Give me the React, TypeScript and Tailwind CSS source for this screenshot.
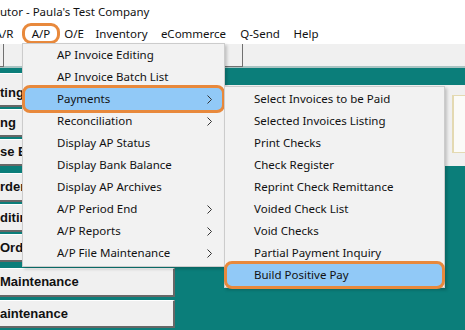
import React from 'react';

const apItems = [
  { label: 'AP Invoice Editing' },
  { label: 'AP Invoice Batch List' },
  { label: 'Payments', sub: true, active: true },
  { label: 'Reconciliation', sub: true },
  { label: 'Display AP Status' },
  { label: 'Display Bank Balance' },
  { label: 'Display AP Archives' },
  { label: 'A/P Period End', sub: true },
  { label: 'A/P Reports', sub: true },
  { label: 'A/P File Maintenance', sub: true },
];

const paymentItems = [
  { label: 'Select Invoices to be Paid' },
  { label: 'Selected Invoices Listing' },
  { label: 'Print Checks' },
  { label: 'Check Register' },
  { label: 'Reprint Check Remittance' },
  { label: 'Voided Check List' },
  { label: 'Void Checks' },
  { label: 'Partial Payment Inquiry' },
  { label: 'Build Positive Pay', active: true },
];

// left column buttons, mostly hidden behind the menus
const sideButtons = [
  { label: 'ting', cls: 'h-[34px] mb-[2px] pt-[6px]' },
  { label: 'ng', cls: 'h-[28px] mb-[2px]' },
  { label: 'se E', cls: 'h-[27px] mb-[7px]' },
  { label: 'rder', cls: 'h-[29px] mb-[2px]' },
  { label: 'ditin', cls: 'h-[28px] mb-[2px]' },
  { label: 'Ord', cls: 'h-[28px] mb-[6px]' },
  { label: 'Maintenance', cls: 'h-[29px] mb-[3px]' },
  { label: 'aintenance', cls: 'h-[28px]' },
];

const menuBar = [
  { label: 'A/R', cls: 'ml-[-14px] w-[36px]' },
  { label: 'A/P', cls: 'w-[38px]', open: true },
  { label: 'O/E', cls: 'w-[28px]' },
  { label: 'Inventory', cls: 'w-[67px]' },
  { label: 'eCommerce', cls: 'w-[77px]' },
  { label: 'Q-Send', cls: 'w-[56px]' },
  { label: 'Help', cls: 'w-[36px]' },
];

const Chevron = () => (
  <svg className="w-[5px] h-[9px] text-[#333]" viewBox="0 0 5 9" fill="none" stroke="currentColor">
    <path d="M0.5 0.5l4 4-4 4" strokeWidth={1} />
  </svg>
);

const Ring = () => (
  <span className="pointer-events-none absolute -inset-[3px] rounded-[8px] border-[3px] border-[#e8893c]" />
);

export default function App() {
  return (
    <div
      className="relative w-[465px] h-[330px] overflow-hidden bg-white text-[#111]"
      style={{ fontFamily: '"Noto Sans", "Open Sans", sans-serif' }}
    >
      {/* title bar */}
      <div className="h-[22px] pt-[1px] flex items-center text-[11.5px] leading-none whitespace-nowrap">
        utor - Paula's Test Company
      </div>

      {/* menu bar */}
      <div className="h-[22px] flex items-center text-[11.5px] whitespace-nowrap">
        {menuBar.map((m) => (
          <div
            key={m.label}
            className={`${m.cls} h-[21px] pt-[1px] flex items-center justify-center shrink-0 ${
              m.open ? 'rounded-[9px] border-[3px] border-[#e8893c]' : ''
            }`}
          >
            {m.label}
          </div>
        ))}
      </div>

      {/* toolbar */}
      <div className="h-[24px] flex items-start bg-[#f0f0f0] border-b-2 border-[#a8c3c2]">
        <div className="w-[4px] h-[23px] border-r border-b border-[#707070]" />
        <div className="ml-[176px] w-[63px] h-[23px] border-r border-b border-[#707070] border-l border-l-white" />
      </div>

      {/* main area */}
      <div className="flex h-[262px] bg-[#0b7e7a]">
        <div className="w-[175px] pt-[5px] flex flex-col">
          {sideButtons.map((b) => (
            <div
              key={b.label}
              className={`${b.cls} shrink-0 flex items-center bg-[#f0f0f0] border-t border-t-white border-r-2 border-b-2 border-[#676767] text-[13px] font-bold whitespace-nowrap`}
              style={{ fontFamily: '"Liberation Sans", Arial, sans-serif' }}
            >
              {b.label}
            </div>
          ))}
        </div>
        <div className="flex-1 pt-[17px]">
          <div className="h-[81px] bg-[#f0f0f0] pt-[10px]">
            <div className="ml-[277px] h-[58px] border-l-2 border-t border-b border-[#e4dab2] bg-[#fbfbf8]" />
          </div>
        </div>
      </div>

      {/* A/P dropdown */}
      <div className="absolute left-[22px] top-[43px] w-[203px] border border-[#cccccc] bg-[#f2f2f2] pb-[2px] text-[11.5px] whitespace-nowrap shadow-[2px_2px_3px_rgba(0,0,0,0.2)]">
        {apItems.map((it) => (
          <div
            key={it.label}
            className={`relative mx-[2px] h-[22px] flex items-center justify-between pl-[32px] pr-[10px] ${
              it.active ? 'bg-[#91c9f7]' : ''
            }`}
          >
            <span>{it.label}</span>
            {it.sub && <Chevron />}
            {it.active && <Ring />}
          </div>
        ))}
      </div>

      {/* Payments submenu */}
      <div className="absolute left-[224px] top-[86px] w-[221px] border border-[#cccccc] bg-[#f2f2f2] text-[11.5px] whitespace-nowrap shadow-[2px_2px_3px_rgba(0,0,0,0.2)]">
        <div className="pt-[1px] pb-[1px]">
          {paymentItems.map((it) => (
            <div
              key={it.label}
              className={`relative mx-[2px] h-[22px] flex items-center pl-[27px] ${
                it.active ? 'bg-[#91c9f7]' : ''
              }`}
            >
              <span>{it.label}</span>
              {it.active && <Ring />}
            </div>
          ))}
        </div>
      </div>
    </div>
  );
}
